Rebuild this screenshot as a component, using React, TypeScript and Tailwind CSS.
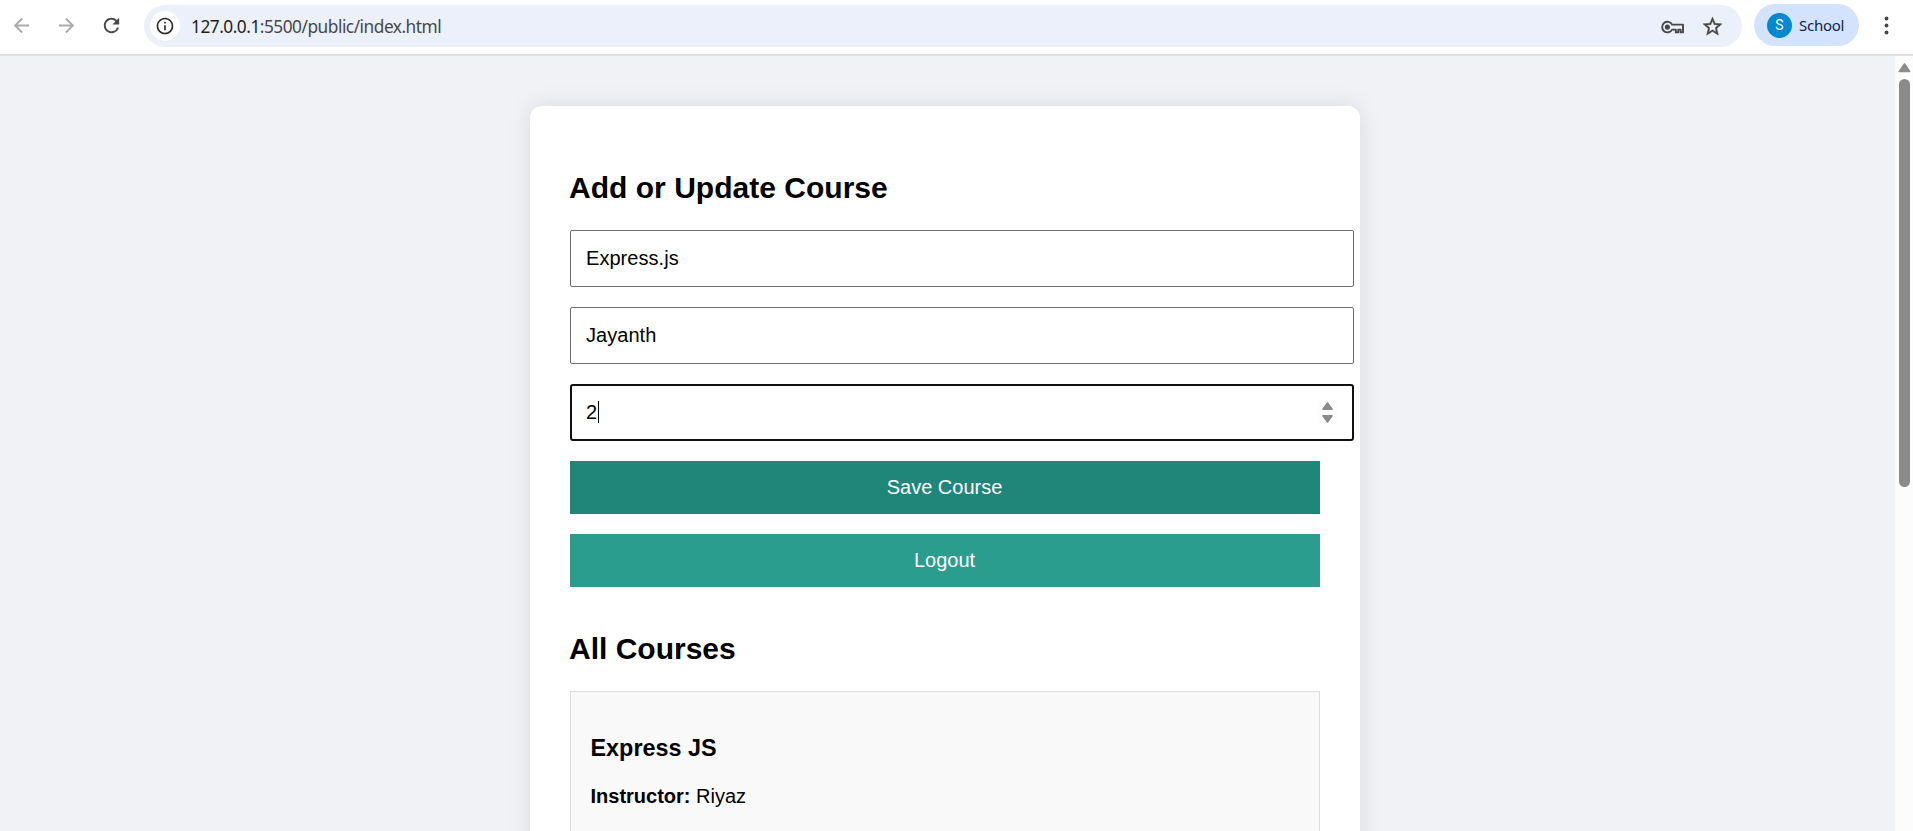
import React from "react";
import { MdArrowBack, MdArrowForward, MdRefresh, MdInfoOutline } from "react-icons/md";

function KeyIcon() {
  return (
    <svg className="mt-[2px]" width="25" height="16" viewBox="0 0 25 16" fill="none" stroke="#474747" strokeWidth="2">
      <path d="M12.1 5.6A5.3 5.3 0 1 0 12.1 10.6H15.8V13.4H18.2V10.6H20.6V13.4H23V5.6Z" strokeLinejoin="round" strokeWidth="1.9" />
      <circle cx="7.4" cy="8.1" r="2.6" fill="#474747" stroke="none" />
    </svg>
  );
}

function StarIcon() {
  return (
    <svg className="mt-px" width="23" height="23" viewBox="0 0 24 24" fill="#474747" stroke="#474747" strokeWidth="0.4">
      <path d="M22 9.24l-7.19-.62L12 2 9.19 8.63 2 9.24l5.46 4.73L5.82 21 12 17.27 18.18 21l-1.63-7.03L22 9.24zM12 15.4l-3.76 2.27 1-4.28-3.32-2.88 4.38-.38L12 6.1l1.71 4.04 4.38.38-3.32 2.88 1 4.28L12 15.4z" />
    </svg>
  );
}

function Toolbar() {
  return (
    <header className="flex h-14 shrink-0 items-start border-b-2 border-[#dedfe1] bg-white">
      <div className="flex h-[51px] w-36 shrink-0 items-center pl-[10px] text-[#ababab]">
        <MdArrowBack size={23} />
        <MdArrowForward size={23} className="ml-[22px]" />
        <MdRefresh size={23} className="ml-[22px] text-[#474747]" />
      </div>
      <div className="mt-[5px] flex h-[42px] w-[1598px] items-center rounded-full bg-[#ebf0fa] pl-[6px] pr-[18px]">
        <div className="flex size-[30px] items-center justify-center rounded-full bg-white text-[#2b2b2b]">
          <MdInfoOutline size={20} />
        </div>
        <div className="ml-[11px] mt-[2px] text-[17.3px] leading-6 tracking-[-0.49px] text-[#474747]">
          <span className="text-[#1f1f1f]">127.0.0.1</span>:5500/public/index.html
        </div>
        <div className="ml-auto flex items-center gap-4">
          <KeyIcon />
          <StarIcon />
        </div>
      </div>
      <div className="ml-3 mt-1 flex h-[42px] w-[105px] items-center rounded-full bg-[#d3e3fd] pl-[13px] text-[#0a1f4d]">
        <div className="mt-px flex size-[25px] items-center justify-center rounded-full bg-[#0288d1] font-[Roboto] text-[14px] text-white">S</div>
        <span className="ml-[7px] text-[15px] tracking-[-0.25px]">School</span>
      </div>
      <svg className="ml-[23px] mt-[15px]" width="8" height="22" fill="#474747">
        <circle cx="4.5" cy="3.5" r="1.9" />
        <circle cx="4.5" cy="10.5" r="1.9" />
        <circle cx="4.5" cy="17.5" r="1.9" />
      </svg>
    </header>
  );
}

function Field({ value }: { value: string }) {
  return (
    <div className="mb-5 flex h-[57px] w-[784px] items-center rounded-[2px] border border-[#6e6e6e] pb-[2px] pl-[15px] text-[20px] tracking-[0.05px]">
      {value}
    </div>
  );
}

export default function App() {
  return (
    <div className="flex h-[831px] w-[1913px] flex-col overflow-hidden font-['Noto_Sans',sans-serif]">
      <Toolbar />
      <div className="flex min-h-0 flex-1 bg-[#f0f2f5] font-['Liberation_Sans',Arial,sans-serif] text-black">
        <main className="flex flex-1 justify-center overflow-hidden pt-[50px]">
          <section className="-ml-[5px] h-[900px] w-[830px] rounded-t-[12px] bg-white px-10 pt-[65px] shadow-[0_0_25px_rgba(0,0,0,0.1)]">
            <h2 className="-ml-px mb-[25px] text-[30px] font-bold leading-[34px] tracking-[0.02px]">Add or Update Course</h2>
            <Field value="Express.js" />
            <Field value="Jayanth" />
            <div className="mb-5 flex h-[57px] w-[784px] items-center rounded-[3px] border-2 border-[#101010] pb-[2px] pl-[14px] pr-[15px] text-[20px]">
              2<span className="ml-px h-[22px] w-px bg-black" />
              <svg className="ml-auto bg-[#fcfcfc]" width="19" height="22" fill="#8b8b8b" stroke="#8b8b8b" strokeWidth="1.5" strokeLinejoin="round">
                <path d="M9.5 1.9L14.1 8.2H4.9Z" />
                <path d="M4.9 14.8H14.1L9.5 21.1Z" />
              </svg>
            </div>
            <button className="mb-5 block h-[53px] w-full bg-[#21867a] pb-[2px] pr-px text-[20px] text-white">Save Course</button>
            <button className="block h-[53px] w-full bg-[#2a9d8f] pb-[2px] pr-px text-[20px] text-white">Logout</button>
            <h2 className="-ml-px mb-[25px] mt-[45px] text-[30px] font-bold leading-[34px]">All Courses</h2>
            <article className="h-60 border border-[#dddddd] bg-[#f9f9f9] px-5 pt-[43px]">
              <h3 className="-ml-[0.5px] text-[23.4px] font-bold leading-[27px]">Express JS</h3>
              <p className="-ml-[0.5px] mt-[23px] text-[20px] leading-[23px]"><strong>Instructor:</strong> Riyaz</p>
            </article>
          </section>
        </main>
        <div className="flex w-[18px] flex-col items-center bg-[#fcfcfc] pt-[6px]">
          <svg width="13" height="11" fill="#8b8b8b" stroke="#8b8b8b" strokeWidth="1.5" strokeLinejoin="round">
            <path d="M6.5 1.8L11.7 9.5H1.3Z" />
          </svg>
          <div className="ml-px mt-[6px] h-[408px] w-[11px] rounded-full bg-[#8b8b8b]" />
        </div>
      </div>
    </div>
  );
}
